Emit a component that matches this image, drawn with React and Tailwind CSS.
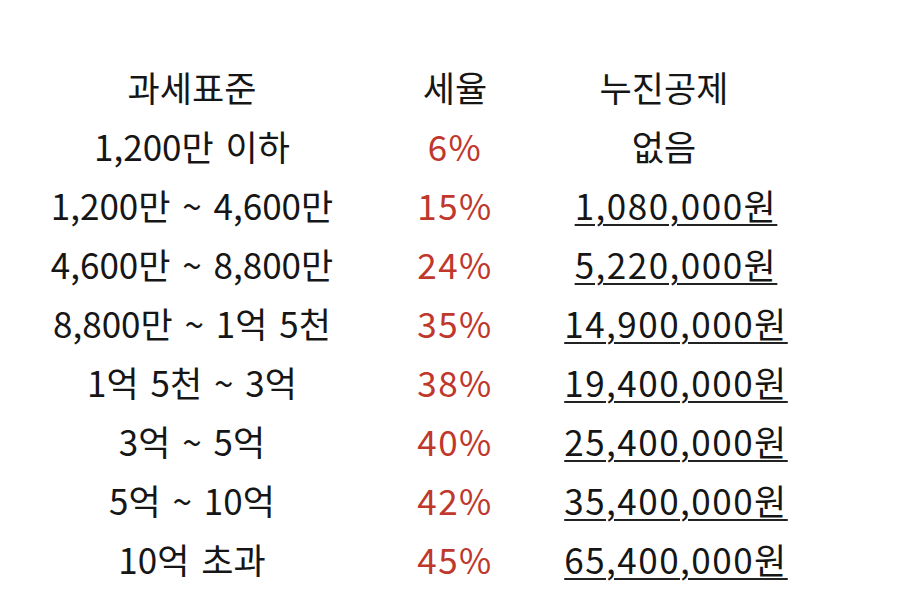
const rows = [
  { base: "1,200만 이하", rate: "6%", deduct: "없음", plain: true },
  { base: "1,200만 ~ 4,600만", rate: "15%", deduct: "1,080,000원" },
  { base: "4,600만 ~ 8,800만", rate: "24%", deduct: "5,220,000원" },
  { base: "8,800만 ~ 1억 5천", rate: "35%", deduct: "14,900,000원" },
  { base: "1억 5천 ~ 3억", rate: "38%", deduct: "19,400,000원" },
  { base: "3억 ~ 5억", rate: "40%", deduct: "25,400,000원" },
  { base: "5억 ~ 10억", rate: "42%", deduct: "35,400,000원" },
  { base: "10억 초과", rate: "45%", deduct: "65,400,000원" },
];

export default function App() {
  return (
    <div
      className="w-[900px] h-[615px] bg-white pt-[57px] text-[#161616] overflow-hidden"
      style={{ fontFamily: '"Noto Sans CJK KR", "Noto Sans", sans-serif' }}
    >
      <div className="grid grid-cols-[384px_142px_276px] text-[35px] leading-[59px] [word-spacing:4px]">
        <div className="text-center">과세표준</div>
        <div className="text-center">세율</div>
        <div className="text-center">누진공제</div>
        {rows.map((r) => (
          <div key={r.rate} className="contents">
            <div className="text-center">{r.base}</div>
            <div className="text-center text-[#c0372c] tracking-[1.5px]">{r.rate}</div>
            <div className="text-center whitespace-nowrap">
              <span
                className={
                  r.plain
                    ? ""
                    : "ml-[24px] tracking-[1.5px] underline decoration-2 underline-offset-[4px] decoration-[#222]"
                }
              >
                {r.deduct}
              </span>
            </div>
          </div>
        ))}
      </div>
    </div>
  );
}
